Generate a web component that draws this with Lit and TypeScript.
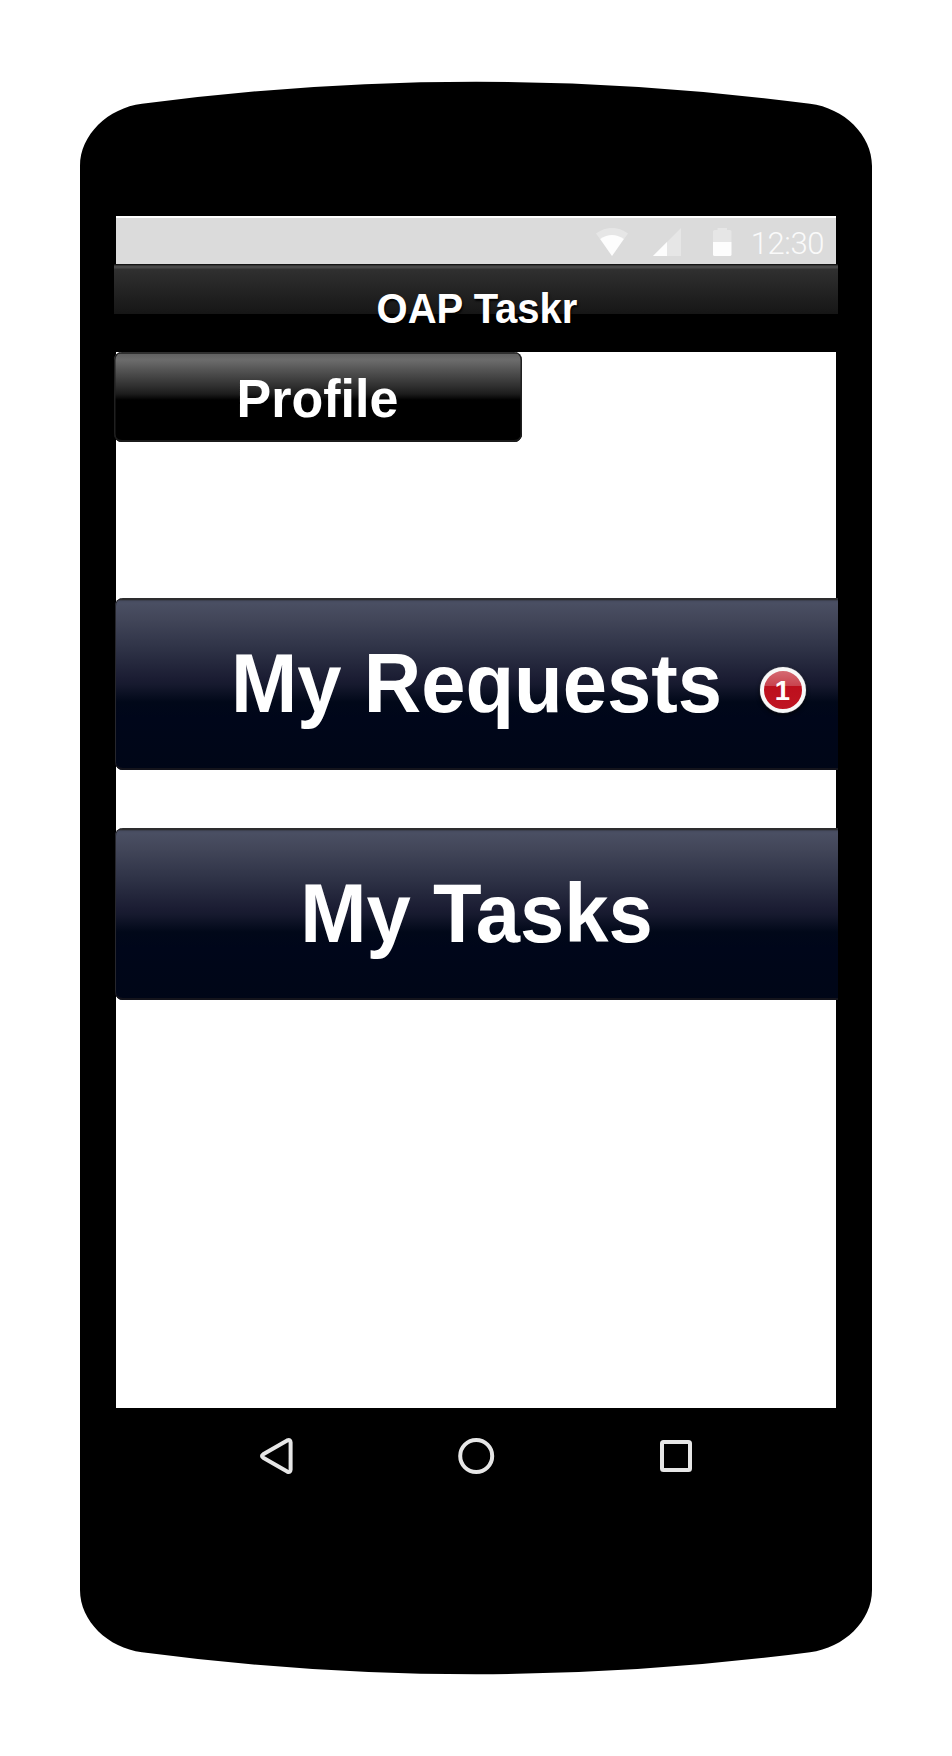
import { LitElement, html, css, svg } from "lit";
import { customElement, property } from "lit/decorators.js";

@customElement("status-bar")
class StatusBar extends LitElement {
  @property() time = "";

  static styles = css`
    :host {
      display: flex;
      box-sizing: border-box;
      height: 48px;
      padding-right: 12px;
      border-top: 2px solid #fff;
      background: #dbdbdb;
      justify-content: flex-end;
      align-items: flex-start;
    }
    .icons { display: block; flex: none; margin-right: 19px; }
    .time {
      display: flex;
      width: 71px;
      justify-content: flex-end;
      font: 300 31px/52px Roboto, "Open Sans", sans-serif;
      letter-spacing: -0.4px;
      color: #fafafa;
      white-space: nowrap;
    }
  `;

  render() {
    return html`
      <svg class="icons" width="140" height="46" viewBox="594 218 140 46">
        <path d="M596 233.4Q612 222.8 628 233.4L612 256Z" fill="#e6e6e6" />
        <path d="M600.2 239Q612 231 623.8 239L612 256Z" fill="#fdfdfd" />
        <path d="M653 256L681 228V256Z" fill="#e6e6e6" />
        <path d="M653 256L667 242V256Z" fill="#fdfdfd" />
        <path d="M713 242V231.6Q713 230 714.6 230H717.5V228H727V230H729.9Q731.5 230 731.5 231.6V242Z" fill="#e6e6e6" />
        <path d="M713 242H731.5V254.4Q731.5 256 729.9 256H714.6Q713 256 713 254.4Z" fill="#fdfdfd" />
      </svg>
      <span class="time">${this.time}</span>
    `;
  }
}

@customElement("gloss-button")
class GlossButton extends LitElement {
  @property() label = "";
  @property({ reflect: true }) tone = "navy";
  @property() badge = "";

  static styles = css`
    :host { display: block; }
    .button {
      position: relative;
      box-sizing: border-box;
      display: flex;
      width: 100%;
      height: 100%;
      margin: 0;
      padding: 0;
      justify-content: center;
      align-items: center;
      border: 0;
      color: #fff;
      font: bold 79.6px/92px "Liberation Sans", Arial, sans-serif;
      white-space: nowrap;
    }
    .label { display: block; transform: translateY(1px) scaleY(1.045); transform-origin: 50% 80%; }
    .navy {
      border-radius: 8px 0 0 8px;
      background: linear-gradient(#2d2d2f 0 1.5px, #464b5f 3px, #4a4f63 5px, #44485b 18px, #2f3347 50px, #1b1d33 80px, #171a2f 86px, #010819 104px, #00061a 120px, #000617 100%);
      box-shadow: inset 0 -2px #14141c, inset 1px 0 #26262c;
    }
    .black {
      border-radius: 8px;
      background: linear-gradient(#2f2f2f 0 2px, #626262 2.5px, #6c6c6c 8px, #545454 18px, #2b2b2b 36px, #1c1c1c 42px, #000 48px);
      box-shadow: inset 0 -2px #1b1b1b, inset 1.5px 0 #202020, inset -1.5px 0 #202020;
      font-size: 52px;
      line-height: 60px;
      padding: 2px 1px 0 0;
    }
    .badge {
      position: absolute;
      right: 32px;
      top: 69px;
      box-sizing: border-box;
      width: 46px;
      height: 46px;
      border: 4px solid #f8f8f8;
      border-radius: 50%;
      background: linear-gradient(#d9737b 0, #c8434e 19px, #bd0f1d 19.5px, #bf1623 100%) border-box;
      box-shadow: 0 0 1px #bbb, 0 2px 4px rgba(0, 0, 0, 0.8);
      font-size: 27.5px;
      line-height: 39px;
      padding-right: 1px;
      text-align: center;
    }
  `;

  render() {
    return html`<button class="button ${this.tone}">
      <span class="label">${this.label}</span>
      ${this.badge ? html`<span class="badge">${this.badge}</span>` : null}
    </button>`;
  }
}

@customElement("nav-keys")
class NavKeys extends LitElement {
  static styles = css`
    :host { display: flex; justify-content: space-between; padding: 28px 142px 0 142px; }
    .key { display: block; fill: none; stroke: #e6e6e6; stroke-width: 4; stroke-linejoin: round; }
  `;

  render() {
    return html`
      <svg class="key" width="40" height="40" viewBox="258 1436 40 40">
        <path d="M263.2 1454.3L287.2 1440.4Q290.4 1438.9 290.6 1442.3V1469.7Q290.4 1473.1 287.2 1471.6L263.2 1457.7Q260.8 1456 263.2 1454.3Z" />
      </svg>
      <svg class="key" width="40" height="40" viewBox="456 1436 40 40"><circle cx="476.2" cy="1456" r="16" /></svg>
      <svg class="key" width="40" height="40" viewBox="654 1436 40 40"><rect x="662" y="1442" width="28" height="28" rx="1.5" /></svg>
    `;
  }
}

const bodyShape = svg`<path d="M80 166C80 135 108 108 142 103.8Q476 59.6 810 103.8C844 108 872 135 872 166V1590C872 1621 844 1648 810 1652.200Q476 1696.400 142 1652.200C108 1648 80 1621 80 1590Z" />`;

@customElement("app-root")
class AppRoot extends LitElement {
  static styles = css`
    :host { display: block; width: 952px; height: 1756px; background: #fff; }
    .stage { display: grid; width: 952px; height: 1756px; }
    .body, .screen { grid-area: 1 / 1; }
    .body { display: block; }
    .screen { z-index: 1; width: 720px; margin: 216px 116px 0; }
    .title {
      box-sizing: border-box;
      height: 88px;
      margin: 0 -2px;
      padding: 21px 0 0 2px;
      background: linear-gradient(#151515 0 1px, #343434 1px 2px, #484848 2px 4px, #303030 5px, #161616 50px, #000 50px);
      color: #fff;
      font: bold 40px/46px "Liberation Sans", Arial, sans-serif;
      text-align: center;
      text-shadow: 1px 2px 2px #000;
    }
    .name { display: block; transform: translateY(0.5px) scaleY(1.045); transform-origin: 50% 80%; }
    .content { display: flex; flex-direction: column; height: 1056px; background: #fff; }
    .profile { width: 408px; height: 90px; margin: 0 0 156px -2px; }
    .wide { height: 172px; margin: 0 -2px 58px -1px; }
  `;

  render() {
    return html`
      <main class="stage">
        <svg class="body" width="952" height="1756" viewBox="0 0 952 1756">${bodyShape}</svg>
        <section class="screen">
          <status-bar time="12:30"></status-bar>
          <header class="title"><span class="name">OAP Taskr</span></header>
          <div class="content">
            <gloss-button class="profile" tone="black" label="Profile"></gloss-button>
            <gloss-button class="wide" label="My Requests" badge="1"></gloss-button>
            <gloss-button class="wide" label="My Tasks"></gloss-button>
          </div>
          <nav-keys></nav-keys>
        </section>
      </main>
    `;
  }
}
